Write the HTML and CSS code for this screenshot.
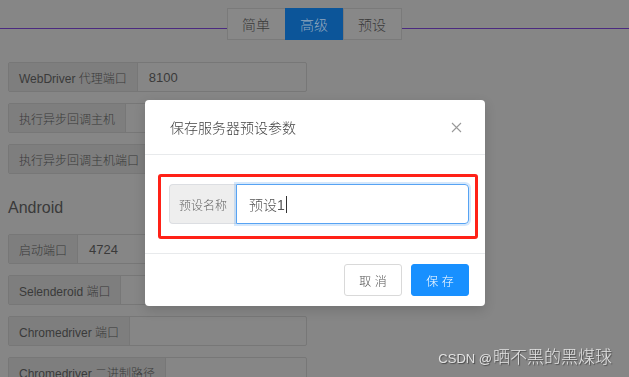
FILE: index.html
```html
<!DOCTYPE html>
<html lang="zh-CN">

<head>
    <meta charset="UTF-8" />
    <meta name="viewport" content="width=device-width, initial-scale=1.0" />
    <title>服务器设置</title>

    <link rel="stylesheet" href="styles.css">
</head>

<body>
    <div class="page">
        <div class="tab-bar">
            <div class="tabs">
                <button class="tab">简单</button>
                <button class="tab active">高级</button>
                <button class="tab">预设</button>
            </div>
        </div>

        <form class="settings">
            <div class="field"><span class="addon">WebDriver 代理端口</span><span class="value">8100</span></div>
            <div class="field"><span class="addon">执行异步回调主机</span><span class="value"></span></div>
            <div class="field"><span class="addon">执行异步回调主机端口</span><span class="value"></span></div>

            <h3>Android</h3>
            <div class="field"><span class="addon">启动端口</span><span class="value">4724</span></div>
            <div class="field"><span class="addon">Selenderoid 端口</span><span class="value"></span></div>
            <div class="field"><span class="addon">Chromedriver 端口</span><span class="value"></span></div>
            <div class="field"><span class="addon">Chromedriver 二进制路径</span><span class="value"></span></div>
        </form>
    </div>

    <!-- modal: save preset -->
    <div class="modal">
        <div class="modal-header">
            <span class="modal-title">保存服务器预设参数</span>
            <svg class="close" width="11" height="11" viewBox="0 0 11 11">
                <path d="M1 1 L10 10 M10 1 L1 10" stroke="#999" stroke-width="1.1" fill="none" />
            </svg>
        </div>
        <div class="modal-body">
            <div class="highlight">
                <div class="input-group">
                    <span class="addon">预设名称</span>
                    <div class="input">预设1<span class="caret"></span></div>
                </div>
            </div>
        </div>
        <div class="modal-footer">
            <button type="button" class="btn">取 消</button>
            <button type="button" class="btn btn-primary">保 存</button>
        </div>
    </div>

    <div class="watermark"><span class="site">CSDN @</span>晒不黑的黑煤球</div>
</body>

</html>
```

FILE: styles.css
```css
:root {
    --page-bg: #868686;
    --page-text: #3a3a3a;
    --page-border: #777;
    --page-addon: #7e7e7e;
    --tab-active: #0c5599;
    --line-purple: #4b2a80;
    --accent: #1890ff;
    --divider: #e8eaec;
}

* {
    box-sizing: border-box;
}

body {
    margin: 0;
    height: 100vh;
    overflow: hidden;
    background-color: var(--page-bg);
    font-family: "Liberation Sans", "Noto Sans CJK SC", sans-serif;
    font-weight: 300;
}

button {
    font-family: inherit;
    font-weight: inherit;
    cursor: pointer;
    padding: 0;
}

/* background page (dimmed) */
.tab-bar {
    display: flex;
    justify-content: center;
    padding-top: 8px;
    background: linear-gradient(var(--line-purple), var(--line-purple)) 0 28px / 100% 1px no-repeat;
}

.tabs {
    display: flex;
}

.tab {
    width: 59px;
    height: 32px;
    margin-left: -1px;
    border: 1px solid #7a7a7a;
    background-color: #888;
    color: var(--page-text);
    font-size: 14px;
}

.tab.active {
    background-color: var(--tab-active);
    border-color: var(--tab-active);
    color: #93a7bd;
}

.settings {
    width: 315px;
    padding: 22px 8px 0;
}

.settings h3 {
    margin: 22px 0 14px;
    font-size: 16px;
    font-weight: normal;
    line-height: 24px;
    color: var(--page-text);
}

.field {
    display: flex;
    height: 30px;
    margin-bottom: 11px;
    border: 1px solid var(--page-border);
    border-radius: 2px;
    font-size: 12px;
    color: var(--page-text);

    .addon {
        display: flex;
        align-items: center;
        padding: 0 10px;
        background-color: var(--page-addon);
        border-right: 1px solid var(--page-border);
        white-space: nowrap;
    }

    .value {
        display: flex;
        align-items: center;
        padding: 0 11px;
        font-size: 13px;
    }
}

/* modal */
.modal {
    position: fixed;
    top: 100px;
    left: 145px;
    width: 340px;
    background-color: #fff;
    border-radius: 4px;
    box-shadow: 0 4px 12px rgba(0, 0, 0, 0.15);
}

.modal-header {
    display: flex;
    justify-content: space-between;
    align-items: center;
    height: 55px;
    padding: 0 23px 0 25px;
    border-bottom: 1px solid var(--divider);
}

.modal-title {
    font-size: 14px;
    color: #444;
}

.modal-body {
    padding: 19px 7px 14px 13px;
}

.highlight {
    padding: 7px 6px 12px 8px;
    border: 3px solid #ff2117;
    border-radius: 3px;
}

.input-group {
    display: flex;
    height: 40px;

    .addon {
        display: flex;
        align-items: center;
        justify-content: center;
        width: 67px;
        background-color: #eee;
        border: 1px solid #dcdee2;
        border-right: none;
        border-radius: 4px 0 0 4px;
        font-size: 12px;
        color: #666;
    }

    .input {
        flex: 1;
        display: flex;
        align-items: center;
        padding-left: 12px;
        border: 1px solid #57a3f3;
        border-radius: 0 4px 4px 0;
        box-shadow: 0 0 0 2px rgba(45, 140, 240, 0.2);
        font-size: 14px;
        color: #555;
    }

    .caret {
        display: inline-block;
        width: 1px;
        height: 17px;
        margin-left: 1px;
        background-color: #333;
    }
}

.modal-footer {
    display: flex;
    justify-content: flex-end;
    gap: 9px;
    padding: 10px 16px;
    border-top: 1px solid var(--divider);
}

.btn {
    width: 58px;
    height: 32px;
    border: 1px solid #d9d9d9;
    border-radius: 3px;
    background-color: #fff;
    color: #555;
    font-size: 12px;
}

.btn-primary {
    background-color: var(--accent);
    border-color: var(--accent);
    color: #fff;
}

.watermark {
    position: fixed;
    right: 17px;
    bottom: 8px;
    font-size: 17px;
    line-height: 20px;
    color: #e2e2e2;
    text-shadow: 1px 1px 1px rgba(0, 0, 0, 0.45);

    .site {
        font-size: 13px;
        margin-right: 1px;
    }
}
```
